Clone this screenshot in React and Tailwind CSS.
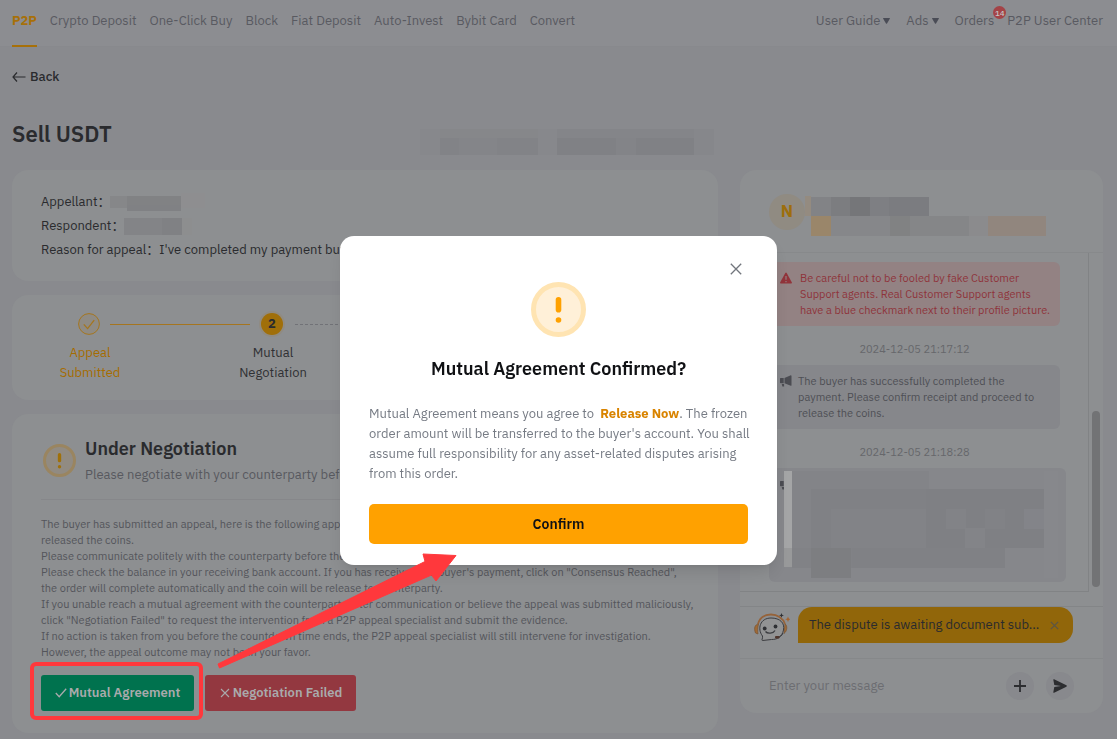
/**
 * Appeal page for a P2P sell order: order info, appeal progress,
 * negotiation actions and the order chat, with the confirm dialog open.
 */

import { useState } from 'react'

const NAV_LEFT = ['P2P', 'Crypto Deposit', 'One-Click Buy', 'Block', 'Fiat Deposit', 'Auto-Invest', 'Bybit Card', 'Convert']

const STEPS = [
  { label: ['Appeal', 'Submitted'], state: 'done' },
  { label: ['Mutual', 'Negotiation'], state: 'active' },
  { state: 'todo' },
  { state: 'todo' },
]

const NOTES = [
  'The buyer has submitted an appeal, here is the following appeal',
  'released the coins.',
  'Please communicate politely with the counterparty before the',
  'Please check the balance in your receiving bank account. If you has received the buyer\'s payment, click on "Consensus Reached",',
  'the order will complete automatically and the coin will be release to counterparty.',
  'If you unable reach a mutual agreement with the counterparty after communication or believe the appeal was submitted maliciously,',
  'click "Negotiation Failed" to request the intervention from a P2P appeal specialist and submit the evidence.',
  'If no action is taken from you before the countdown time ends, the P2P appeal specialist will still intervene for investigation.',
  'However, the appeal outcome may not be in your favor.',
]

export default function App() {
  return (
    <div className="min-h-screen bg-[#898a8e] text-[#2a2b2e] text-[13px] font-['IBM_Plex_Sans',Roboto,'Noto_Sans_CJK_SC',sans-serif]">
      <TopNav />
      <main className="pl-3 pr-3.5">
        <a href="#back" className="mt-5 flex h-5 w-fit items-center gap-1 font-medium">
          <svg className="h-3.5 w-3.5" viewBox="0 0 14 14" fill="none" stroke="currentColor" strokeWidth="1.2">
            <path d="M5 2.5 1 7l4 4.5M1 7h12.5" />
          </svg>
          Back
        </a>
        <div className="mt-[30px] flex h-8 items-center">
          <h1 className="w-[408px] text-[22px] font-semibold">Sell USDT</h1>
          <Mosaic
            className="mt-[18px]"
            width={294}
            height={26}
            cells={[
              [0, 0, 20, 26, '#87888c'], [20, 0, 98, 10, '#86878a'], [20, 9, 98, 17, '#828387'],
              [39, 9, 38, 17, '#848589'], [118, 0, 19, 26, '#87888c'], [137, 0, 137, 10, '#848589'],
              [137, 9, 137, 17, '#808185'], [196, 9, 20, 17, '#838488'], [274, 0, 20, 26, '#86878b'],
            ]}
          />
        </div>
        <div className="mt-[21px] grid grid-cols-[minmax(0,1fr)_363px] items-start gap-[22px] pb-1.5">
          <div className="flex flex-col gap-3.5">
            <AppealInfo />
            <Progress />
            <Negotiation />
          </div>
          <Chat />
        </div>
      </main>
      <ConfirmDialog />
      <PointerArrow />
    </div>
  )
}

/* ──────────────────────────────────────────────────────────────────────── */
function TopNav() {
  return (
    <header className="flex h-[47px] justify-between border-b border-[#88898d] bg-[#8c8d91] pl-3 pr-3.5 text-[#595a61]">
      <nav className="flex gap-[13px]">
        {NAV_LEFT.map((item, i) => (
          <a
            key={item}
            href="#nav"
            className={i === 0
              ? 'flex h-[47px] items-center border-b-2 border-[#a77009] pb-1 font-bold text-[#a77009]'
              : 'flex h-[47px] items-center border-b-2 border-transparent pb-1'}
          >
            {item}
          </a>
        ))}
      </nav>
      <nav className="flex items-center pb-1">
        <a href="#guide" className="mr-4 flex items-center gap-[3px]">User Guide <Caret /></a>
        <a href="#ads" className="mr-4 flex items-center gap-[3px]">Ads <Caret /></a>
        <a href="#orders" className="relative mr-[13px]">
          Orders
          <span className="absolute -right-[12px] -top-[5px] flex h-[13px] w-[13px] items-center justify-center rounded-full bg-[#a44347] text-[8px] font-medium text-[#c4c5c6]">
            14
          </span>
        </a>
        <a href="#center">P2P User Center</a>
      </nav>
    </header>
  )
}

function Caret() {
  return (
    <svg className="h-1.5 w-[7px]" viewBox="0 0 7 6" fill="#4a4c56">
      <path d="M.5 0h6q.7 0 .3.7L4 5.4q-.5.6-1 0L.2.7Q-.2 0 .5 0Z" />
    </svg>
  )
}

/* ──────────────────────────────────────────────────────────────────────── */
function AppealInfo() {
  return (
    <section className="h-[111px] rounded-2xl bg-[#8d8f91] px-[29px] pt-5 leading-6">
      <div className="flex h-6 items-center">
        Appellant：
        <Mosaic width={110} height={18} cells={[
          [0, 3, 17, 12, '#868789'], [17, 3, 54, 12, '#818284'], [17, 12, 54, 6, '#808184'], [71, 0, 24, 15, '#8e8e90'],
        ]} />
      </div>
      <div className="flex h-6 items-center">
        Respondent：
        <Mosaic width={76} height={18} cells={[
          [0, 1, 38, 17, '#838487'], [38, 1, 20, 17, '#808184'], [58, 1, 10, 17, '#8d8e8f'],
        ]} />
      </div>
      <p>Reason for appeal：I've completed my payment but</p>
    </section>
  )
}

function Progress() {
  return (
    <section className="h-[105px] rounded-2xl bg-[#8d8f91] px-[29px] pt-[18px]">
      <ol className="flex">
        {STEPS.map((step, i) => (
          <li key={i} className={i < 3 ? 'flex-1' : 'w-[99px]'}>
            <div className="flex h-[22px] items-center pl-[37px]">
              <StepDot state={step.state} n={i + 1} />
              {i < 3 && (
                <span
                  className={step.state === 'done'
                    ? '-mr-[26px] ml-2.5 h-px flex-1 bg-[#a5751f]'
                    : '-mr-[26px] ml-3 flex-1 border-t border-dashed border-[#717277]'}
                />
              )}
            </div>
            {step.label && (
              <p className={step.state === 'done' ? 'mt-2 w-[98px] text-center leading-5 text-[#a66c00]' : 'mt-2 w-[98px] text-center leading-5 text-[#303134]'}>
                {step.label[0]}<br />{step.label[1]}
              </p>
            )}
          </li>
        ))}
      </ol>
    </section>
  )
}

function StepDot({ state, n }) {
  if (state === 'done') {
    return (
      <svg className="h-[22px] w-[22px] shrink-0" viewBox="0 0 22 22" fill="none" stroke="#a5761f">
        <circle cx="11" cy="11" r="10.4" fill="#8f8b84" />
        <path d="m5.8 11.4 3.8 4.2 6.6-8.4" strokeWidth="1.3" />
      </svg>
    )
  }
  if (state === 'todo') {
    return <span className="h-[22px] w-[22px] shrink-0 rounded-full bg-[#7c7d81]" />
  }
  return (
    <span className="flex h-[22px] w-[22px] shrink-0 items-center justify-center rounded-full bg-[#a06f0a] font-bold ring-2 ring-[#908b82]">
      {n}
    </span>
  )
}

/* ──────────────────────────────────────────────────────────────────────── */
function Negotiation() {
  return (
    <section className="h-[319px] rounded-2xl bg-[#8d8f91] px-[29px] pt-[23px]">
      <div className="flex h-[63px] gap-[9px] border-b border-[#86878a]">
        <AlertMark className="ml-0.5 mt-[7px] h-[33px] w-[33px] shrink-0" ring="#9a8560" fill="#918b82" mark="#a07009" />
        <div className="min-w-0">
          <h2 className="text-[18px] font-semibold leading-6">Under Negotiation</h2>
          <p className="mt-1 whitespace-nowrap leading-5 text-[#58595f]">Please negotiate with your counterparty before</p>
        </div>
      </div>
      <div className="mt-4 h-[147px] text-[11px] leading-4 text-[#54555b]">
        {NOTES.map((line) => <p key={line} className="whitespace-nowrap">{line}</p>)}
      </div>
      <div className="mt-3 flex gap-[11px] font-semibold text-[#a9aaac]">
        <div className="relative">
          <button type="button" className="flex h-9 w-[153px] items-center justify-center gap-0.5 rounded-[3px] bg-[#00724e]">
            <svg className="h-3 w-3" viewBox="0 0 12 12" fill="none" stroke="currentColor" strokeWidth="1.3"><path d="m.8 6 3.4 3.8 7-8" /></svg>
            Mutual Agreement
          </button>
          <span className="pointer-events-none absolute -bottom-[9px] -left-[11px] -right-[9px] -top-[13px] rounded-md border-4 border-[#ff383c]" />
        </div>
        <button type="button" className="flex h-9 w-[151px] items-center justify-center gap-0.5 rounded-[3px] bg-[#933840]">
          <svg className="h-3 w-3" viewBox="0 0 12 12" fill="none" stroke="currentColor" strokeWidth="1.1"><path d="m2 2 8 8M10 2l-8 8" /></svg>
          Negotiation Failed
        </button>
      </div>
    </section>
  )
}

function AlertMark({ className, ring, fill, mark }) {
  return (
    <svg className={className} viewBox="0 0 55 55">
      <circle cx="27.5" cy="27.5" r="25" fill={fill} stroke={ring} strokeWidth="5" />
      <rect x="24.7" y="15" width="5.6" height="15.6" rx="2.8" fill={mark} />
      <circle cx="27.5" cy="38" r="2.8" fill={mark} />
    </svg>
  )
}

/* ──────────────────────────────────────────────────────────────────────── */
function Chat() {
  return (
    <aside className="h-[543px] rounded-2xl bg-[#8d8f91]">
      <div className="flex h-[83px] border-b border-[#87898b] pl-[29px] pt-[24px]">
        <span className="flex h-9 w-9 items-center justify-center rounded-full bg-[#908b82] text-[17px] font-bold text-[#9d6e0c]">N</span>
        <Mosaic className="mt-0.5" width={258} height={42} cells={[
          [0, 0, 6, 20, '#948b80'], [6, 1, 118, 20, '#7b7c80'], [6, 1, 20, 20, '#828386'], [26, 1, 19, 20, '#7c7d80'],
          [45, 1, 20, 20, '#757679'], [65, 1, 19, 20, '#7e7f83'], [6, 20, 20, 20, '#9a866a'], [26, 20, 59, 20, '#86878a'],
          [85, 20, 20, 20, '#818283'], [105, 20, 59, 20, '#858688'], [164, 20, 19, 20, '#8b8b8d'], [183, 20, 58, 20, '#91867e'],
        ]} />
      </div>
      <div className="flex h-[354px] border-b border-[#838587]">
        <div className="mb-3.5 flex-1 overflow-hidden border-b border-r border-[#818385] pl-[29px] pr-7 text-[11px] leading-4">
          <div className="mt-[9px] flex gap-2 rounded-md bg-[#938283] py-2 pl-[11px] text-[#8f343b]">
            <svg className="mt-0.5 h-3 w-3 shrink-0" viewBox="0 0 12 12">
              <path d="M6 .6q.4 0 .7.5l5.2 9.3q.3 1-.7 1H.8q-1 0-.7-1L5.3 1.100Q5.600.6 6 .6Z" fill="#92343b" />
              <path d="M6 4v3.700M6 9v1.200" stroke="#938283" strokeWidth="1.200" />
            </svg>
            <p className="whitespace-nowrap">
              Be careful not to be fooled by fake Customer<br />Support agents. Real Customer Support agents<br />have a blue checkmark next to their profile picture.
            </p>
          </div>
          <time className="mt-[15px] block text-center text-[#66676b]">2024-12-05 21:17:12</time>
          <div className="mt-2 flex gap-1.5 rounded-md bg-[#86878b] py-2 pl-[11px] text-[#4e4f55]">
            <Horn />
            <p className="whitespace-nowrap">
              The buyer has successfully completed the<br />payment. Please confirm receipt and proceed to<br />release the coins.
            </p>
          </div>
          <time className="mt-[15px] block text-center text-[#66676b]">2024-12-05 21:18:28</time>
          <div className="-mr-1.5 mt-2 flex h-[114px] rounded-md bg-[#86878b] pl-[11px] pt-0.5">
            <div className="w-1 shrink-0 overflow-hidden pt-1.5"><Horn /></div>
            <Mosaic width={280} height={110} cells={[
              [0, 1, 8, 96, '#a4a5a6'], [8, 1, 137, 97, '#838488'], [27, 19, 118, 79, '#808185'], [47, 39, 95, 39, '#828387'],
              [142, 19, 118, 59, '#7f8084'], [162, 39, 20, 20, '#828387'], [201, 39, 20, 20, '#818286'],
              [181, 58, 20, 20, '#838488'], [240, 39, 20, 20, '#838489'], [142, 78, 79, 20, '#808185'],
              [0, 78, 8, 19, '#98999a'], [8, 78, 60, 20, '#818286'], [27, 78, 40, 30, '#7d7e81'], [260, 1, 14, 107, '#87888c'],
            ]} />
          </div>
        </div>
        <div className="flex w-3.5 justify-center pt-[158px]">
          <span className="h-[176px] w-2 rounded-full bg-[#727375]" />
        </div>
      </div>
      <div className="flex h-[52px] border-b border-[#86888a] pl-3.5">
        <Robot />
        <div className="ml-2 flex h-9 w-[275px] items-center justify-between rounded-[14px] rounded-bl-none bg-[#91660a] pl-[11px] pr-3.5">
          <span>The dispute is awaiting document sub...</span>
          <button type="button" aria-label="Dismiss">
            <svg className="h-[9px] w-[9px]" viewBox="0 0 9 9" stroke="#5a5548" strokeWidth="1.2"><path d="m.8.8 7.400 7.400M8.200.8.8 8.200" /></svg>
          </button>
        </div>
      </div>
      <div className="flex h-[54px] items-center pl-[29px] pr-[29px]">
        <input
          aria-label="Message"
          placeholder="Enter your message"
          className="min-w-0 flex-1 bg-transparent outline-none placeholder:text-[#6c6d71]"
        />
        <button type="button" aria-label="Add" className="flex h-7 w-7 items-center justify-center rounded-full bg-[#88898d]">
          <svg className="h-3 w-3" viewBox="0 0 12 12" stroke="#2c2d30" strokeWidth="1.800"><path d="M6 0v12M0 6h12" /></svg>
        </button>
        <button type="button" aria-label="Send" className="ml-3 flex h-7 w-7 items-center justify-center rounded-full bg-[#88898d]">
          <svg className="h-3.5 w-3.5" viewBox="0 0 14 14" fill="#2c2d30"><path d="M.3.8q0-.8.8-.5l12.300 6q.8.7 0 1.400l-12.300 6q-.8.3-.8-.5L1.300 8l6.700-1-6.700-1Z" /></svg>
        </button>
      </div>
    </aside>
  )
}

function Horn() {
  return (
    <svg className="mt-0.5 h-3 w-3 shrink-0" viewBox="0 0 12 12" fill="#4b4c52">
      <path d="M4.500 3 10.800.3q.7 0 .7.6v9.300q0 .6-.7.6L4.500 8.200ZM0 3.600Q0 3 .6 3h3.100v5.200H.6Q0 8.200 0 7.600ZM1.700 9h2.400v2.500H2.400Z" />
    </svg>
  )
}

function Robot() {
  return (
    <svg className="h-9 w-9" viewBox="0 0 36 36" fill="none" stroke="#3b3c40" strokeWidth="1">
      <path d="M4 17C6 10 11 7.500 17 7.500S29 11 31 17" stroke="#96633a" strokeWidth="1.800" />
      <path d="M8.500 29C3 22 6 11 17 11c9 0 14 5 12.500 12-1.500 7-6 9.500-12 9.500l-9 1c-1.500 0 .5-2 0-4.500" fill="#929394" />
      <path d="M4.500 17C1 17.500-.5 21 1.500 26l2.500 1C3.500 24 3.500 21 4.500 17ZM31 17c2.500 1 2.500 7-1 9.500Z" fill="#a06a35" stroke="#775334" strokeWidth=".7" />
      <path d="M29 26c-1 2.500-3 4-6 4.500" />
      <rect x="21" y="29" width="4.500" height="2.600" rx="1" fill="#4f352c" stroke="none" />
      <g fill="#2f3034" stroke="none">
        <circle cx="10.700" cy="21.500" r="1.900" /><circle cx="21.500" cy="19.500" r="1.900" />
        <path d="m27.500 6 .7 1.700 1.700.7-1.700.7-.7 1.700-.7-1.700-1.700-.7 1.700-.7Z" />
      </g>
      <path d="M11.500 24.500c2 2.500 8 2 9.500-1" strokeWidth="1.300" />
      <path d="m34 9.500.8 2 2 .8-2 .8-.8 2-.8-2-2-.8 2-.8Z" fill="#a4622e" stroke="none" />
    </svg>
  )
}

/* Pixelated block drawn over private names and messages. cells: [x, y, w, h, colour] */
function Mosaic({ width, height, cells, className = '' }) {
  return (
    <svg className={`shrink-0 ${className}`} width={width} height={height} aria-hidden="true">
      {cells.map(([x, y, w, h, c], i) => <rect key={i} x={x} y={y} width={w} height={h} fill={c} />)}
    </svg>
  )
}

/* ──────────────────────────────────────────────────────────────────────── */
function ConfirmDialog() {
  const [open, setOpen] = useState(true)
  if (!open) return null

  return (
    <div className="fixed inset-0 flex items-start justify-center pt-[236px]">
      <div role="dialog" aria-modal="true" aria-labelledby="confirm-title" className="relative w-[437px] rounded-[14px] bg-white px-[29px] pb-[21px] pt-[46px] shadow-lg">
        <button type="button" aria-label="Close" onClick={() => setOpen(false)} className="absolute right-[35px] top-[27px]">
          <svg className="h-3 w-3" viewBox="0 0 12 12" stroke="#71757c" strokeWidth="1.300"><path d="m.8.8 10.400 10.400M11.200.8.8 11.200" /></svg>
        </button>
        <AlertMark className="mx-auto h-[55px] w-[55px]" ring="#ffe4b2" fill="#fff0d8" mark="#ffa100" />
        <h2 id="confirm-title" className="mt-5 text-center text-[18px] font-semibold leading-6 text-[#101114]">
          Mutual Agreement Confirmed?
        </h2>
        <p className="mt-[23px] whitespace-nowrap leading-5 text-[#767b84]">
          Mutual Agreement means you agree to &nbsp;<b className="font-bold text-[#d98400]">Release Now</b>. The frozen<br />
          order amount will be transferred to the buyer's account. You shall<br />
          assume full responsibility for any asset-related disputes arising<br />
          from this order.
        </p>
        <button type="button" className="mt-5 h-10 w-full rounded-[5px] bg-[#ffa100] text-[14px] font-semibold text-[#101114]">
          Confirm
        </button>
      </div>
    </div>
  )
}

function PointerArrow() {
  return (
    <svg className="pointer-events-none absolute left-[217px] top-[553px]" width="240" height="118" viewBox="217 553 240 118">
      <path d="m218 664 207-102.500-2-7.500 33 1.500-20 25.500-4.500-6L219.500 668Z" fill="#ff383c" stroke="#ff383c" strokeLinejoin="round" />
    </svg>
  )
}
